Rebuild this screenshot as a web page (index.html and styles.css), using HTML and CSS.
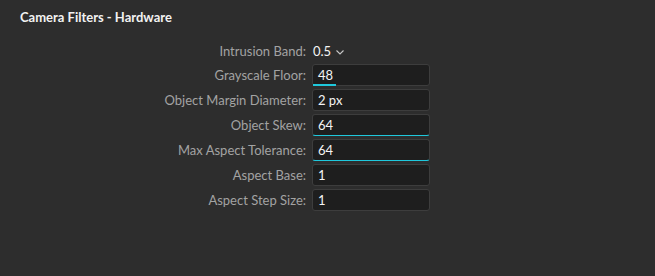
FILE: index.html
```html
<!DOCTYPE html>
<html>
<head>
<meta charset="utf-8">
<link rel="stylesheet" href="styles.css">
</head>
<body>
<div class="panel">
  <div class="title">Camera Filters - Hardware</div>
  <div class="form">
    <div class="label first">Intrusion Band:</div>
    <div class="select">0.5 <svg class="chev" width="8" height="5" viewBox="0 0 8 5"><path d="M0.5 0.5 L4 4 L7.5 0.5" fill="none" stroke="#c8c8c8" stroke-width="1.1"/></svg></div>

    <div class="label">Grayscale Floor:</div>
    <div class="input"><span>48</span><i class="bar partial"></i></div>

    <div class="label">Object Margin Diameter:</div>
    <div class="input"><span>2 px</span></div>

    <div class="label">Object Skew:</div>
    <div class="input focus"><span>64</span></div>

    <div class="label">Max Aspect Tolerance:</div>
    <div class="input focus"><span>64</span></div>

    <div class="label">Aspect Base:</div>
    <div class="input"><span>1</span></div>

    <div class="label">Aspect Step Size:</div>
    <div class="input"><span>1</span></div>
  </div>
</div>
</body>
</html>
```

FILE: styles.css
```css
html, body {
  margin: 0;
  padding: 0;
  background: #2d2d2d;
}
body {
  font-family: Lato, "Open Sans", sans-serif;
  width: 655px;
  height: 276px;
  overflow: hidden;
}
.panel {
  box-sizing: border-box;
  width: 655px;
  height: 276px;
  background: #2d2d2d;
  border-radius: 0 0 3px 3px;
  padding: 9px 0 0 20px;
}
.title {
  color: #f2f2f2;
  font-weight: bold;
  font-size: 13px;
  line-height: 17px;
}
.form {
  display: grid;
  grid-template-columns: 286px 118px;
  column-gap: 6px;
  row-gap: 3px;
  margin-top: 15px;
  align-items: center;
}
.label {
  text-align: right;
  color: #a3a3a3;
  font-size: 13px;
  line-height: 22px;
}
.label.first {
  line-height: 20px;
}
.select {
  color: #f4f4f4;
  font-size: 13px;
  line-height: 18px;
  padding-left: 1px;
  display: flex;
  align-items: center;
  gap: 2px;
}
.chev {
  margin-left: 3px;
  margin-top: 2px;
}
.input {
  position: relative;
  box-sizing: border-box;
  height: 22px;
  background: #1e1e1e;
  border: 1px solid #3d3d3d;
  border-radius: 3px;
  color: #f4f4f4;
  font-size: 13px;
  line-height: 20px;
  padding-left: 5px;
}
.input.focus {
  border-bottom: 1px solid #1fc8dc;
}
.bar.partial {
  position: absolute;
  left: 0;
  bottom: -1px;
  width: 23px;
  height: 2px;
  background: #1fc8dc;
}
```
